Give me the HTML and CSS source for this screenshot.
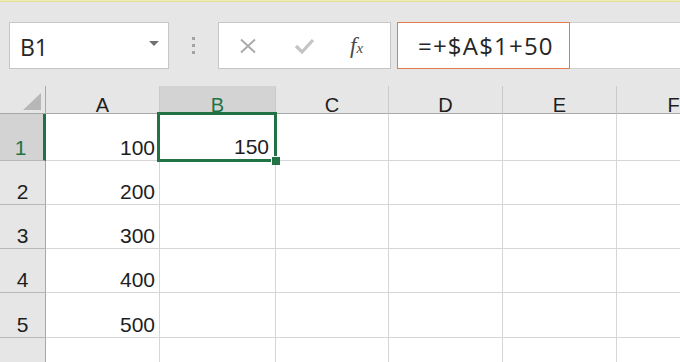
FILE: index.html
```html
<!DOCTYPE html>
<html>
<head>
<meta charset="utf-8">
<link rel="stylesheet" href="styles.css">
</head>
<body>
<div class="topline"></div>
<div class="toolbar">
  <div class="namebox"><span class="nb-text">B1</span><span class="nb-arrow"></span></div>
  <div class="dots"><i></i><i></i><i></i></div>
  <div class="fnbox">
    <svg class="ic-x" width="18" height="16" viewBox="0 0 18 16"><path d="M2 1.5L16 14.5M16 1.5L2 14.5" stroke="#ababab" stroke-width="2" fill="none"/></svg>
    <svg class="ic-ok" width="21" height="16" viewBox="0 0 21 16"><path d="M2 8L8 14L19 2" stroke="#c4c4c4" stroke-width="3.2" fill="none"/></svg>
    <span class="ic-fx">f<span class="x">x</span></span>
  </div>
  <div class="formula"><div class="fbox">=+$A$1+50</div></div>
</div>
<div class="grid">
  <div class="corner"><svg width="20" height="19" viewBox="0 0 20 19"><path d="M19 1L19 18L1 18Z" fill="#b7b7b7"/></svg></div>
  <div class="h">A</div>
  <div class="h hsel">B</div>
  <div class="h">C</div>
  <div class="h">D</div>
  <div class="h">E</div>
  <div class="h">F</div>

  <div class="rh rsel">1</div>
  <div class="c">100</div>
  <div class="c sel">150<span class="selbox"></span><span class="handle"></span></div>
  <div class="c"></div><div class="c"></div><div class="c"></div><div class="c"></div>

  <div class="rh">2</div>
  <div class="c">200</div>
  <div class="c"></div><div class="c"></div><div class="c"></div><div class="c"></div><div class="c"></div>

  <div class="rh">3</div>
  <div class="c">300</div>
  <div class="c"></div><div class="c"></div><div class="c"></div><div class="c"></div><div class="c"></div>

  <div class="rh">4</div>
  <div class="c">400</div>
  <div class="c"></div><div class="c"></div><div class="c"></div><div class="c"></div><div class="c"></div>

  <div class="rh">5</div>
  <div class="c">500</div>
  <div class="c"></div><div class="c"></div><div class="c"></div><div class="c"></div><div class="c"></div>

  <div class="rh">6</div>
  <div class="c"></div>
  <div class="c"></div><div class="c"></div><div class="c"></div><div class="c"></div><div class="c"></div>
</div>
</body>
</html>
```

FILE: styles.css
```css
html, body {
  margin: 0;
  padding: 0;
}
body {
  width: 680px;
  height: 362px;
  overflow: hidden;
  background: #e6e6e6;
  font-family: "Liberation Sans", Arial, sans-serif;
  color: #222;
}
.topline {
  height: 2px;
  background: linear-gradient(#f6f3c4, #dcd78e);
}
.toolbar {
  height: 84px;
  box-sizing: border-box;
  padding: 20px 0 0 9px;
  display: flex;
  align-items: flex-start;
}
.namebox {
  width: 160px;
  height: 47px;
  box-sizing: border-box;
  background: #fff;
  border: 1px solid #c6c6c6;
  display: flex;
  align-items: center;
  padding: 4px 9px 0 10px;
}
.nb-text {
  font-family: "Open Sans", sans-serif;
  font-size: 23px;
  line-height: 1;
  color: #262626;
}
.nb-arrow {
  margin-left: auto;
  margin-top: -8px;
  width: 0;
  height: 0;
  border-left: 5px solid transparent;
  border-right: 5px solid transparent;
  border-top: 5px solid #707070;
}
.dots {
  width: 49px;
  height: 47px;
  display: flex;
  flex-direction: column;
  align-items: center;
  justify-content: center;
  gap: 4px;
}
.dots i {
  display: block;
  width: 3px;
  height: 3px;
  background: #a3a3a3;
}
.fnbox {
  width: 173px;
  height: 47px;
  box-sizing: border-box;
  background: #fff;
  border: 1px solid #c6c6c6;
  display: flex;
  align-items: center;
  padding-left: 20px;
}
.ic-x { margin-top: 1px; }
.ic-ok { margin-left: 37px; margin-top: 1px; }
.ic-fx {
  margin-left: 35px;
  font-family: "Liberation Serif", serif;
  font-style: italic;
  font-size: 23px;
  color: #4a4a4a;
  line-height: 1;
}
.ic-fx .x { font-size: 15px; }
.formula {
  flex: 1;
  margin-left: 6px;
  height: 47px;
  background: #fff;
  box-sizing: border-box;
  border-top: 1px solid #d0d0d0;
  border-bottom: 1px solid #d0d0d0;
  display: flex;
  align-items: stretch;
}
.fbox {
  width: 173px;
  margin: -1px 0;
  box-sizing: border-box;
  border: 1px solid #e17a4f;
  display: flex;
  align-items: center;
  padding-left: 20px;
  font-family: "Open Sans", sans-serif;
  font-size: 24px;
  letter-spacing: 1.2px;
  line-height: 1;
  color: #262626;
}
.grid {
  display: grid;
  grid-template-columns: 46px 114px 116px 113px 114px 114px 114px;
  grid-template-rows: 28px 47px 44px 44px 44px 45px 44px;
  width: 680px;
  overflow: hidden;
  background: #fff;
}
.grid > div {
  box-sizing: border-box;
  display: flex;
  align-items: flex-end;
}
.corner {
  background: #e6e6e6;
  border-right: 1px solid #a8a8a8;
  border-bottom: 1px solid #a8a8a8;
  justify-content: flex-end;
  padding: 0 3px 2px 0;
}
.h {
  background: #e6e6e6;
  border-right: 1px solid #cacaca;
  border-bottom: 1px solid #a8a8a8;
  justify-content: center;
  font-size: 20px;
  line-height: 16px;
  color: #1e1e1e;
}
.h.hsel {
  background: #d3d3d3;
  color: #217346;
}
.rh {
  background: #e6e6e6;
  border-right: 1px solid #a8a8a8;
  border-bottom: 1px solid #b8b8b8;
  justify-content: center;
  font-size: 21px;
  line-height: 1;
  padding-bottom: 2px;
  color: #1e1e1e;
}
.rh.rsel {
  background: #d3d3d3;
  color: #217346;
  border-right: 3px solid #217346;
  padding-right: 2px;
}
.c {
  background: #fff;
  border-right: 1px solid #d6d6d6;
  border-bottom: 1px solid #d6d6d6;
  justify-content: flex-end;
  padding: 0 4px 2px 0;
  font-size: 21px;
  line-height: 1;
  color: #1e1e1e;
}
.c.sel {
  position: relative;
  overflow: visible;
  padding-right: 6px;
  padding-bottom: 3px;
}
.selbox {
  position: absolute;
  left: -3px;
  top: -2px;
  right: -2px;
  bottom: -2px;
  border: 3px solid #217346;
  pointer-events: none;
}
.handle {
  position: absolute;
  right: -5px;
  bottom: -5px;
  width: 8px;
  height: 8px;
  background: #217346;
  border: 1px solid #fff;
  border-width: 1px 0 0 1px;
}
```
